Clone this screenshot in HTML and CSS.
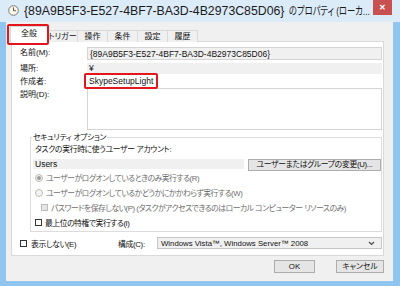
FILE: index.html
```html
<!DOCTYPE html>
<html lang="ja">
<head>
    <meta charset="UTF-8">
    <title>プロパティ</title>
    <link rel="stylesheet" href="styles.css">
</head>
<body>
    <div class="window">
        <div class="titlebar">
            <svg class="app-icon" width="11" height="11" viewBox="0 0 11 11">
                <circle cx="5.5" cy="5.5" r="4.8" fill="#fbf7e4" stroke="#7a7a7a" stroke-width="1"/>
                <path d="M5.5 2.4 V5.7 H7.9" fill="none" stroke="#555" stroke-width="1"/>
            </svg>
            <span class="title">{89A9B5F3-E527-4BF7-BA3D-4B2973C85D06}<span class="title-ja">のプロパティ (ローカ...</span></span>
            <div class="close">&#x2715;</div>
        </div>
        <div class="client">
            <div class="tabs">
                <div class="tab active marked">全般</div>
                <div class="tab">トリガー</div>
                <div class="tab">操作</div>
                <div class="tab">条件</div>
                <div class="tab">設定</div>
                <div class="tab">履歴</div>
            </div>
            <div class="panel">
                <div class="row row-name">
                    <span class="label">名前(M):</span>
                    <div class="field readonly">{89A9B5F3-E527-4BF7-BA3D-4B2973C85D06}</div>
                </div>
                <div class="row row-location">
                    <span class="label">場所:</span>
                    <div class="field plain">¥</div>
                </div>
                <div class="row row-author">
                    <span class="label">作成者:</span>
                    <div class="field author"><span class="marked">SkypeSetupLight</span></div>
                </div>
                <div class="row row-desc">
                    <span class="label">説明(D):</span>
                    <div class="field textarea"></div>
                </div>

                <fieldset class="group">
                    <legend>セキュリティ オプション</legend>
                    <div class="account-label">タスクの実行時に使うユーザー アカウント:</div>
                    <div class="account-row">
                        <div class="field readonly user">Users</div>
                        <div class="button change">ユーザーまたはグループの変更(U)...</div>
                    </div>
                    <div class="option disabled"><span class="radio checked"></span>ユーザーがログオンしているときのみ実行する(R)</div>
                    <div class="option disabled"><span class="radio"></span>ユーザーがログオンしているかどうかにかかわらず実行する(W)</div>
                    <div class="option disabled indent"><span class="check"></span>パスワードを保存しない(P) (タスクがアクセスできるのはローカル コンピューター リソースのみ)</div>
                    <div class="option"><span class="check"></span>最上位の特権で実行する(I)</div>
                </fieldset>

                <div class="bottom-row">
                    <div class="option hidden-opt"><span class="check"></span>表示しない(E)</div>
                    <span class="config-label">構成(C):</span>
                    <div class="combo">
                        <span>Windows Vista™, Windows Server™ 2008</span>
                        <svg class="arrow" width="7" height="5" viewBox="0 0 7 5">
                            <path d="M1 1 L3.5 3.5 L6 1" fill="none" stroke="#444" stroke-width="1.1"/>
                        </svg>
                    </div>
                </div>
            </div>
            <div class="buttons">
                <div class="button ok">OK</div>
                <div class="button cancel">キャンセル</div>
            </div>
        </div>
    </div>
</body>
</html>
```

FILE: styles.css
```css
* {
    box-sizing: border-box;
    margin: 0;
    padding: 0;
}

body {
    font-family: 'Liberation Sans', 'Noto Sans CJK JP', sans-serif;
    font-size: 8.5px;
    font-feature-settings: "palt";
    color: #111;
    background: #8fc5ef;
}

.window {
    width: 400px;
    height: 286px;
    background: #8fc5ef;
    display: flex;
    flex-direction: column;
    padding: 0 7px 5px 6px;
}

/* title bar */
.titlebar {
    height: 22px;
    margin: 0 -7px 0 -6px;
    padding-left: 8px;
    display: flex;
    align-items: flex-start;
    background: #dcebf8;
}

.app-icon {
    margin-top: 5px;
    flex-shrink: 0;
}

.title {
    font-size: 12.3px;
    line-height: 22px;
    margin-left: 5px;
    color: #1a1a1a;
    white-space: nowrap;
    min-width: 0;
    overflow: hidden;
}

.title-ja {
    display: inline-block;
    margin-left: 5px;
    font-size: 11.5px;
    transform: scaleX(0.72);
    transform-origin: left center;
}

.close {
    flex-shrink: 0;
    margin-left: auto;
    margin-right: 8px;
    width: 19px;
    height: 15px;
    background: #c75050;
    color: #fff;
    font-size: 8px;
    font-weight: bold;
    display: flex;
    align-items: center;
    justify-content: center;
}

.client {
    flex: 1;
    background: #f0f0f0;
    display: flex;
    flex-direction: column;
}

/* tabs */
.tabs {
    display: flex;
    align-items: flex-end;
    height: 16px;
    margin: 4px 0 0 4px;
    position: relative;
    z-index: 1;
}

.tab {
    height: 12px;
    width: 31px;
    margin-left: -1px;
    border: 1px solid #d9d9d9;
    border-bottom: none;
    background: #f0f0f0;
    font-size: 8px;
    line-height: 11px;
    text-align: center;
}

.tab.active {
    width: 38px;
    height: 16px;
    margin-left: 0;
    margin-right: -1px;
    background: #fff;
    line-height: 14px;
}

.tab.active + .tab {
    margin-left: 0;
}

.marked {
    position: relative;
}

.marked::after {
    content: "";
    position: absolute;
    border: 2.5px solid #e3161d;
    border-radius: 2px;
}

.tab.marked::after {
    left: -4px;
    top: -3px;
    right: -2px;
    bottom: -3px;
}

/* panel */
.panel {
    margin: -1px 9px 0 5px;
    background: #fff;
    border: 1px solid #d9d9d9;
    padding: 5px 1px 6px 8px;
    font-size: 7.8px;
    letter-spacing: -0.3px;
}

.row {
    display: flex;
    letter-spacing: 0;
}

.label {
    width: 67px;
    flex-shrink: 0;
    font-size: 8px;
}

.field {
    flex: 1;
    padding-left: 2px;
    white-space: nowrap;
    font-size: 8.5px;
}

.row-name {
    height: 13px;
    line-height: 12px;
}

.field.readonly {
    background: #f0f0f0;
    border: 1px solid #d4d4d4;
}

.row-location {
    margin-top: 3px;
    height: 11px;
    line-height: 11px;
}

.field.plain {
    background: #f0f0f0;
}

.row-author {
    margin-top: 1px;
    height: 13px;
    line-height: 13px;
}

.field.author .marked::after {
    left: -5px;
    top: -3px;
    right: -5px;
    bottom: -3px;
}

.row-desc {
    height: 42px;
    line-height: 13px;
}

.field.textarea {
    border: 1px solid #d4d4d4;
}

/* security options */
.group {
    margin: 2px 0 0 10px;
    border: 1px solid #dcdcdc;
    padding: 0 0 1px 4px;
}

.group legend {
    margin-left: -3px;
    padding: 0 1px;
    line-height: 11px;
}

.account-label {
    line-height: 11px;
    margin-top: 1px;
}

.account-row {
    display: flex;
    align-items: flex-start;
    margin-top: 4px;
    height: 12px;
}

.field.user {
    flex: none;
    width: 211px;
    height: 10px;
    margin-left: -2px;
    border: none;
    line-height: 10px;
    letter-spacing: 0;
}

.button {
    height: 13px;
    border: 1px solid #adadad;
    background: #e5e5e5;
    line-height: 11px;
    text-align: center;
}

.button.change {
    width: 133px;
    height: 12px;
    margin-left: 4px;
    line-height: 10px;
}

.option {
    display: flex;
    align-items: center;
    height: 15px;
    white-space: nowrap;
    letter-spacing: -0.45px;
}

.account-row + .option {
    margin-top: -1px;
}

.option.disabled {
    color: #6d6d6d;
}

.option.indent {
    padding-left: 6px;
}

.radio {
    width: 8px;
    height: 8px;
    border-radius: 50%;
    border: 1px solid #bcbcbc;
    background: #f4f4f4;
    margin-right: 3px;
    display: flex;
    align-items: center;
    justify-content: center;
}

.radio.checked::after {
    content: "";
    width: 4px;
    height: 4px;
    border-radius: 50%;
    background: #9a9a9a;
}

.check {
    width: 7px;
    height: 7px;
    border: 1px solid #333;
    background: #fff;
    margin-right: 3px;
}

.option.disabled .check {
    border-color: #bcbcbc;
    background: #e6e6e6;
}

.bottom-row {
    display: flex;
    align-items: center;
    margin-top: 5px;
    height: 12px;
}

.hidden-opt {
    width: 98px;
    letter-spacing: -0.3px;
}

.hidden-opt .check {
    margin-right: 4px;
}

.config-label {
    width: 39px;
}

.combo {
    flex: 1;
    height: 12px;
    border: 1px solid #c6c6c6;
    background: #f0f0f0;
    display: flex;
    align-items: center;
    padding: 0 6px 0 3px;
    letter-spacing: 0;
}

.combo .arrow {
    margin-left: auto;
}

.buttons {
    display: flex;
    justify-content: flex-end;
    gap: 21px;
    margin: 4px 9px 0 0;
    font-size: 7.8px;
}

.button.ok {
    width: 41px;
}

.button.cancel {
    width: 48px;
}
```
